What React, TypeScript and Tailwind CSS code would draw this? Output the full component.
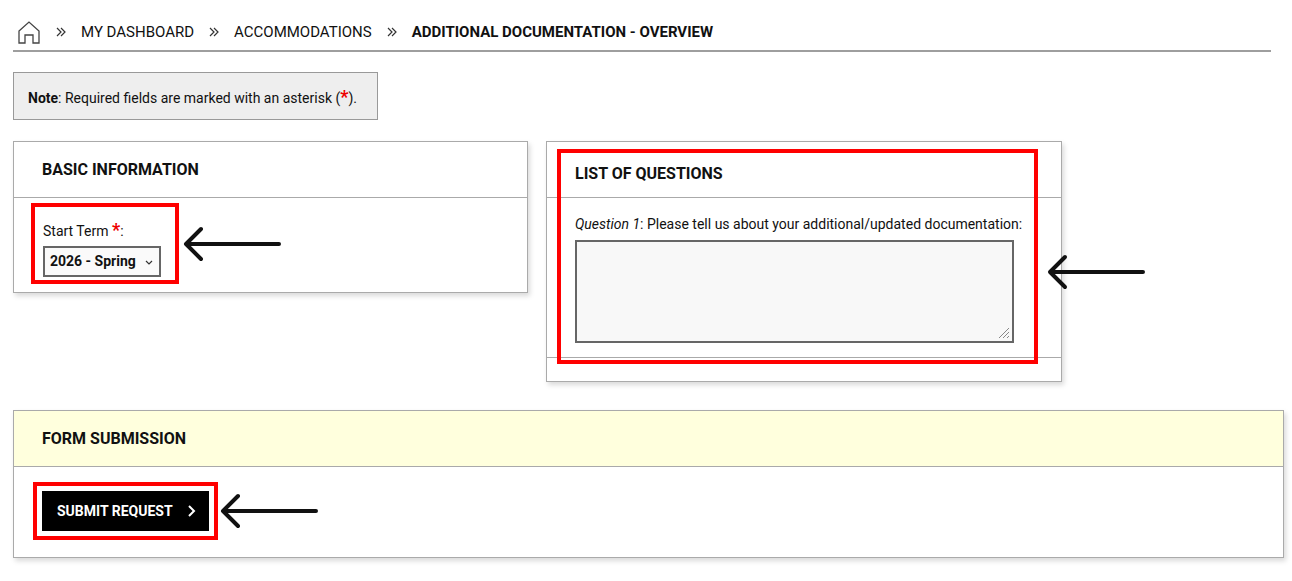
import React from "react";

const Arrow = () => (
  <svg width="98" height="40" viewBox="0 0 98 40" fill="none" stroke="#111" strokeWidth="4" strokeLinecap="round" strokeLinejoin="round">
    <path d="M96 20H4M18 5L3 20l15 15" />
  </svg>
);

const Chev = () => (
  <svg width="12" height="12" viewBox="0 0 12 12" fill="none" stroke="#333" strokeWidth="1.2"><path d="M2 2l4 4-4 4M6 2l4 4-4 4" /></svg>
);

export default function App() {
  return (
    <div className="bg-white text-[#111] text-[14px] px-[13px] pt-[18px] pb-6 w-[1292px] h-[581px]" style={{ fontFamily: "Roboto, 'Liberation Sans', sans-serif" }}>
      <div className="flex items-center gap-[14px] h-[28px] pl-[4px] border-b-2 border-[#9e9e9e] mr-[8px] pb-[4px] box-content">
        <svg width="24" height="24" viewBox="0 0 24 24" fill="none" stroke="#444" strokeWidth="1.3"><path d="M2 11L12 2l10 9v12h-6v-8H8v8H2z" /></svg>
        <Chev /><span className="text-[15px]">MY DASHBOARD</span>
        <Chev /><span className="text-[15px]">ACCOMMODATIONS</span>
        <Chev /><span className="text-[15px] font-bold">ADDITIONAL DOCUMENTATION - OVERVIEW</span>
      </div>
      <div className="mt-[20px] w-[365px] h-[48px] flex items-center pl-[14px] bg-[#eeeeee] border border-[#999]">
        <span><b>Note</b>: Required fields are marked with an asterisk (<span className="text-[#e00] font-bold text-[18px]">*</span>).</span>
      </div>
      <div className="mt-[21px] flex items-start gap-[18px]">
        <div className="w-[515px] h-[152px] border border-[#aaa] shadow-[2px_3px_5px_rgba(0,0,0,0.15)]">
          <div className="h-[56px] flex items-center pl-[28px] border-b border-[#aaa] font-bold text-[16px]">BASIC INFORMATION</div>
          <div className="flex items-center pl-[17px] pt-[5px]">
            <div className="border-[4px] border-[#f00] w-[148px] h-[81px] pl-[8px] pt-[9px]">
              <div>Start Term <span className="text-[#e00] font-bold text-[18px]">*</span>:</div>
              <div className="mt-[3px] w-[118px] h-[31px] border-2 border-[#666] bg-[#fafafa] flex items-center justify-between px-[5px] font-bold">
                2026 - Spring
                <svg width="10" height="10" viewBox="0 0 10 10" fill="none" stroke="#333" strokeWidth="1.2"><path d="M2 4l3 3 3-3" /></svg>
              </div>
            </div>
            <div className="ml-[4px]"><Arrow /></div>
          </div>
        </div>
        <div className="relative w-[516px] h-[241px] border border-[#aaa] shadow-[2px_3px_5px_rgba(0,0,0,0.15)]">
          <div className="h-[56px] border-b border-[#aaa]"></div>
          <div className="h-[160px] border-b border-[#aaa]"></div>
          <div className="absolute left-[10px] top-[7px] w-[481px] h-[215px] border-[4px] border-[#f00] pl-[14px]">
            <div className="h-[42px] flex items-center font-bold text-[16px]">LIST OF QUESTIONS</div>
            <div className="mt-[19px] text-[14px]"><i>Question 1</i>: Please tell us about your additional/updated documentation:</div>
            <div className="mt-[5px] w-[439px] h-[103px] border-2 border-[#666] bg-[#f8f8f8] relative">
              <svg className="absolute right-[2px] bottom-[2px]" width="12" height="12" viewBox="0 0 12 12" stroke="#888" strokeWidth="1"><path d="M11 1L1 11M11 5L5 11M11 9L9 11" /></svg>
            </div>
          </div>
          <div className="absolute left-[500px] top-[110px]"><Arrow /></div>
        </div>
      </div>
      <div className="mt-[28px] w-[1271px] h-[148px] border border-[#aaa] shadow-[2px_3px_5px_rgba(0,0,0,0.15)]">
        <div className="h-[56px] flex items-center pl-[28px] border-b border-[#aaa] bg-[#ffffdd] font-bold text-[16px]">FORM SUBMISSION</div>
        <div className="flex items-center pl-[19px] pt-[15px]">
          <div className="border-[4px] border-[#f00] p-[5px]">
            <div className="w-[167px] h-[40px] bg-black text-white font-bold flex items-center pl-[15px] gap-[14px]">
              SUBMIT REQUEST
              <svg width="10" height="12" viewBox="0 0 10 12" fill="none" stroke="#fff" strokeWidth="2"><path d="M2 1l5 5-5 5" /></svg>
            </div>
          </div>
          <div className="ml-[2px]"><Arrow /></div>
        </div>
      </div>
    </div>
  );
}
